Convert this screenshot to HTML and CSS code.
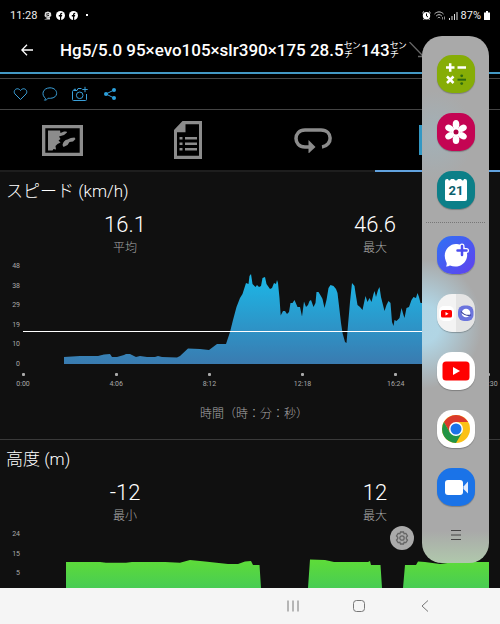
FILE: index.html
```html
<!DOCTYPE html>
<html lang="ja">
<head>
  <meta charset="UTF-8" />
  <meta name="viewport" content="width=device-width, initial-scale=1.0"/>
  <title>Hg5/5.0</title>
  <link rel="stylesheet" href="styles.css">
</head>
<body>

  <div class="screen">

    <div class="status-bar">
      <span class="clock">11:28</span>
      <svg width="9" height="9" viewBox="0 0 9 9"><path d="M1 8.5h6V6.2L5.2 7 3 6.6 1.5 5 2 1.5 5 .5l3 1.2L8.3 5 6 6.5z" fill="#ddd"/><path d="M3 3.2l3-.6M3.4 5L6 4.4" stroke="#222"/></svg>
      <svg width="9" height="9" viewBox="0 0 9 9"><circle cx="4.5" cy="4.5" r="4.5" fill="#fff"/><path d="M4 9V5.5H2.8V4H4c0-1.600.6-2.300 2.200-2.200V3c-.8 0-1 .2-1 1h1L6 5.500h-.8V9z" fill="#000"/></svg>
      <svg width="9" height="9" viewBox="0 0 9 9"><circle cx="4.5" cy="4.5" r="4.5" fill="#fff"/><path d="M4 9V5.5H2.8V4H4c0-1.600.6-2.300 2.200-2.200V3c-.8 0-1 .2-1 1h1L6 5.500h-.8V9z" fill="#000"/></svg>
      <span class="more-dot"></span>
      <div class="status-right">
        <svg width="9" height="9" viewBox="0 0 9 9"><circle cx="4.500" cy="4.800" r="3.700" fill="#fff"/><path d="M.4 2L2 .5M8.600 2L7 .5M1.500 8.800l1-1M7.500 8.800l-1-1" stroke="#fff"/><path d="M4.500 2.500v2.500l1.500 1" stroke="#000" fill="none"/></svg>
        <svg width="12" height="9" viewBox="0 0 12 9" fill="none" stroke="#ccc"><path d="M.5 3C3 .2 7 .2 9.500 3M2.200 5C4 3.200 6 3.200 7.800 5M3.800 7c.8-.8 1.600-.8 2.400 0"/><path d="M8.500 8.500V6M10.500 5.500v3" stroke="#888"/></svg>
        <svg width="9" height="9" viewBox="0 0 9 9"><path d="M0 7h1v2H0zM2.500 5h1v4h-1zM5 3h1v6H5zM7.500 1h1v8h-1z" fill="#ddd"/></svg>
        <span>87%</span>
        <svg width="6" height="9" viewBox="0 0 6 9"><path d="M0 1.500h2V0h2v1.500h2V9H0z" fill="#fff"/></svg>
      </div>
    </div>

    <header class="title-bar">
      <button class="back" type="button" aria-label="戻る">
        <svg width="12" height="12" viewBox="0 0 12 12" fill="none" stroke="#fff" stroke-width="1.300"><path d="M12 6H1M6 .8L.8 6 6 11.200"/></svg>
      </button>
      <h1>Hg5/5.0 95×evo105×slr390×175 28.5<span class="unit">㌢</span>143<span class="unit">㌢</span></h1>
      <svg class="title-arrow" width="16" height="16" viewBox="0 0 16 16" fill="none" stroke="#666" stroke-width="1.300"><path d="M.5 0L14 14M9 14.500h5.500V9"/></svg>
    </header>

    <div class="actions">
      <button type="button" aria-label="いいね">
        <svg width="16" height="16" viewBox="0 0 16 16"><path d="M8.500 13.500L3 8C.3 4.800 5.100.2 8.500 4.500 11.900.2 16.700 4.800 14 8z"/></svg>
      </button>
      <button type="button" aria-label="コメント">
        <svg width="16" height="16" viewBox="0 0 16 16"><path d="M3.500 12.300C-1 9 .5 2 8 1.800 16.500 2 17 12 8.500 12.300c-1 .1-1.500 0-2.300-.1-1.200 1.600-2.500 2-3.700 2 .7-.6 1-1.200 1-1.900z"/></svg>
      </button>
      <button type="button" aria-label="写真を追加">
        <svg width="16" height="16" viewBox="0 0 16 16"><path d="M9.500 2.500H6L5 4.500H1.500q-1 0-1 1v8q0 1 1 1h12q1 0 1-1V8M2 4.300V3.300h2M13 .8v5.400M10.300 3.500h5.400"/><circle cx="7.700" cy="9.300" r="3.300"/></svg>
      </button>
      <button type="button" aria-label="共有">
        <svg class="share" width="16" height="16" viewBox="0 0 16 16"><path d="M12 4L4 8l8 4"/><circle cx="12" cy="4" r="2"/><circle cx="4" cy="8" r="2"/><circle cx="12" cy="12" r="2"/></svg>
      </button>
    </div>

    <nav class="tabs">
      <button type="button" aria-label="地図">
        <svg width="41" height="31" viewBox="0 0 41 31"><path fill-rule="evenodd" d="M0 0h41v31H0zM3.300 3.300v24.400h34.400V3.300z"/><path d="M6 5.500h12l.5 2.500 3.500-1.500q3.500-.5 3 1l-3 2.500-5 1.500 1.500 2.500-2 1.500 2 2-3 1.500-2 2 .5 3.500-2.500-.5-1 1.500H6zM20.500 20q1-5 5-5.500 3-2 7-2l1 1.500-2.500 2.500-3.500.5-2 3-4 2z"/></svg>
      </button>
      <button type="button" aria-label="詳細">
        <svg width="28" height="38" viewBox="0 0 28 38"><path fill-rule="evenodd" d="M8.500 0H28v38H0V9zM11.500 3.300v8H3v23.500h22V3.300z"/><path d="M5.500 16h3v2.500h-3zM11 16h12v2.500H11zM5.500 21.500h3V24h-3zM11 21.500h12V24H11zM5.500 27h3v2.500h-3zM11 27h12v2.500H11z"/></svg>
      </button>
      <button type="button" aria-label="ラップ">
        <svg width="38" height="26" viewBox="0 0 38 26"><path d="M16 20H11C-1 20-1 3 11 3h16c12 0 12 15.500 1 17" fill="none" stroke="#8c8c8c" stroke-width="3.500"/><path d="M14.500 13L21.500 20l-7 6.500z"/></svg>
      </button>
      <button class="active" type="button" aria-label="グラフ">
        <svg width="37" height="30" viewBox="0 0 37 30"><path d="M0 0h3v30H0zM0 27h37v3H0zM8 15h6v10H8zM17 5h6v20h-6zM26 10h6v15h-6z"/></svg>
      </button>
    </nav>

    <main class="charts">
      <section class="card">
        <h2>スピード (km/h)</h2>
        <div class="stats">
          <div class="stat"><strong>16.1</strong><span>平均</span></div>
          <div class="stat"><strong>46.6</strong><span>最大</span></div>
        </div>
        <div class="chart">
          <ul class="y-axis">
            <li>48</li><li>38</li><li>29</li><li>19</li><li>10</li><li>0</li>
          </ul>
          <div class="plot-area">
            <svg class="plot" viewBox="23 266 466 98" preserveAspectRatio="none">
              <defs>
                <linearGradient id="speed" x1="0" y1="0" x2="0" y2="1">
                  <stop offset="0" stop-color="#1bb8e8"/>
                  <stop offset="1" stop-color="#3a7bb0"/>
                </linearGradient>
              </defs>
              <path fill="url(#speed)" d="M64 364V357L80 356 98 356 104 354.500 110 354 112 357 117 357 124 355 126 354 130 354 136 357 140 356 147 357 155 357 158 356 162 357 177 357.500 180 356 188 348.500 200 349 209 350 217 344 226 344 228 338 230 332 233 320 236.500 307 240 298 242.500 294 246 283 248.500 284 249.500 276 251 274 252.500 284 255.500 287 257 285 259 287 261 286 262.500 278 265 277 266.500 284 270 289 272 288 274 283 276 284 277 280 278 283 279.500 298 280.700 315.500 283 311 285 311 287 314 289 312 290.500 303 292.500 303 294.500 300 297.500 307 300 307 302 316.500 304 301.500 306 307 308 305 309.500 301 311 300 313.500 307 315.500 303 316.500 292 318.500 292 321.500 297 322.500 299 324.500 308 326.500 300 328.500 288 330.500 285 333.500 286 336 289 337.500 293 339.500 310 341 323 342.500 333 345 342 346.500 343 348 325 350 302 352 283 354.500 286 355.500 293 357.500 305 360 307 362.500 310 364 303 365.500 296 367.500 302 369.500 298 371.500 302 373.500 294 374.500 291 376 297 378 290 379.500 287 381 297 382.500 303 384.500 311 386.500 305 388.500 301 390.500 303 392 322 393.500 326 394.500 320 396.500 321 399.500 318 401.500 308 403.500 315 404.500 318 406.500 308 409 307 411.500 300 413.500 297 416 298 417.500 293 419 297 420.500 303 426 303 434 312 445 332 448 364z"/>
              <path d="M23 331.500h466" stroke="#fff"/>
            </svg>
            <ul class="x-axis">
              <li>0:00</li><li>4:06</li><li>8:12</li><li>12:18</li><li>16:24</li><li>20:30</li>
            </ul>
          </div>
        </div>
        <p class="axis-title">時間（時：分：秒）</p>
      </section>

      <section class="card">
        <h2>高度 (m)</h2>
        <div class="stats">
          <div class="stat"><strong>-12</strong><span>最小</span></div>
          <div class="stat"><strong>12</strong><span>最大</span></div>
        </div>
        <div class="chart">
          <ul class="y-axis short">
            <li>24</li><li>15</li><li>5</li>
          </ul>
          <div class="plot-area">
            <svg class="plot short" viewBox="23 534 466 54" preserveAspectRatio="none">
              <defs>
                <linearGradient id="altitude" x1="0" y1="0" x2="0" y2="1">
                  <stop offset="0" stop-color="#5edc38"/>
                  <stop offset="1" stop-color="#48cc54"/>
                </linearGradient>
              </defs>
              <path fill="url(#altitude)" d="M66 588V562H100L106 562.700H126L132 562H165L180 562.700 190 560 205 561.500 228 564H238L245 561.500 251 561 253 565H259.500L261 588zM308 588L310 559.500 325 560 334 562H368L370 561 371 565H380.500L382 588zM403 588L405 565H416L418 561.500 425 562 440 564 455 562H489V588z"/>
            </svg>
          </div>
        </div>
      </section>
    </main>

    <nav class="system-nav">
      <button type="button" aria-label="履歴"><svg width="14" height="14" viewBox="0 0 14 14"><path d="M2 1.500v11M7 1.500v11M12 1.500v11"/></svg></button>
      <button type="button" aria-label="ホーム"><svg width="14" height="14" viewBox="0 0 14 14"><rect x="1.500" y="1.500" width="11" height="11" rx="3"/></svg></button>
      <button type="button" aria-label="戻る"><svg width="14" height="14" viewBox="0 0 14 14"><path d="M10 1.500L4 7l6 5.500"/></svg></button>
    </nav>

    <button class="panel-settings" type="button" aria-label="設定">
      <svg width="14" height="14" viewBox="0 0 14 14" fill="none" stroke="#666" stroke-width="1.300"><path d="M5.500 1h3l.6 1.700 1.800-.3L12.500 5l-1.200 1.300v1.400L12.500 9l-1.600 2.600-1.800-.3L8.500 13h-3l-.6-1.700-1.800.3L1.500 9l1.200-1.300V6.300L1.500 5l1.600-2.600 1.800.3z"/><circle cx="7" cy="7" r="2.200"/></svg>
    </button>

    <!-- edge panel -->
    <aside class="edge-panel">
      <div class="app-group">
        <button class="app calc" type="button" aria-label="電卓">
          <svg viewBox="0 0 38 38" fill="none" stroke="#fff" stroke-width="2.500"><path d="M9 12.500h8.500M13.200 8.200v8.600M20.500 12.500H29M10 21.500l6.500 6.500M16.500 21.500L10 28"/><path d="M20.500 24.700H29" stroke="#2f6a10" stroke-width="2"/><circle cx="24.700" cy="20.800" r="1.400" fill="#2f6a10" stroke="none"/><circle cx="24.700" cy="28.600" r="1.400" fill="#2f6a10" stroke="none"/></svg>
        </button>
        <button class="app gallery" type="button" aria-label="ギャラリー">
          <svg viewBox="0 0 38 38" fill="#fff"><g id="petals"><ellipse cx="19" cy="11.500" rx="3.300" ry="4.500"/><ellipse cx="19" cy="26.500" rx="3.300" ry="4.500"/></g><use href="#petals" transform="rotate(60 19 19)"/><use href="#petals" transform="rotate(120 19 19)"/><circle cx="19" cy="19" r="4.500"/><circle cx="19" cy="19" r="2.500" fill="#b00045"/></svg>
        </button>
        <button class="app calendar" type="button" aria-label="カレンダー">
          <svg viewBox="0 0 38 38"><path d="M8 10q0-2 2-2h1q1 3 3 0h3q2 3 4 0h3q2 3 3 0h1q2 0 2 2v18q0 2-2 2H10q-2 0-2-2z" fill="#fff"/><text x="19" y="24" class="day">21</text></svg>
        </button>
      </div>
      <div class="app-group">
        <button class="app messages" type="button" aria-label="メッセージ">
          <svg viewBox="0 0 38 38"><path d="M9 30.500q1.500-2.500 0-5C4.500 15 13 7 20 8c8 1 11 7 10 13-1.500 8-10 11.500-17 8.500q-2 1.200-4 1z" fill="#fff"/><path d="M25 10v9M20.500 14.500h9" stroke="#fff" stroke-width="5" stroke-linecap="round"/><path d="M25 10v9M20.500 14.500h9" stroke="#4c4df0" stroke-width="2.500" stroke-linecap="round"/></svg>
        </button>
        <button class="app pair" type="button" aria-label="YouTubeとブラウザ">
          <svg viewBox="0 0 38 38"><rect x="2" y="12" width="15" height="15" rx="5" fill="#fff"/><rect x="4" y="16" width="11" height="7.500" rx="1.500" fill="#f00"/><path d="M8.500 18v3.500l3-1.700z" fill="#fff"/><rect x="21" y="11.500" width="15.500" height="15.500" rx="6" fill="#6b74dd"/><circle cx="29" cy="19" r="4.300" fill="#fff"/><path d="M24 17.500q4 5 10 3.500" stroke="#343c91" stroke-width="1.200" fill="none"/></svg>
        </button>
        <button class="app youtube" type="button" aria-label="YouTube">
          <svg viewBox="0 0 38 38"><rect x="5.500" y="9.500" width="27" height="19" rx="3.500" fill="#f00"/><path d="M16 15v8l7-4z" fill="#fff"/></svg>
        </button>
        <button class="app chrome" type="button" aria-label="Chrome">
          <svg viewBox="0 0 38 38"><circle cx="19" cy="19" r="14" fill="#fbc116"/><path d="M6.900 12A14 14 0 0 1 31.100 12H19L12.900 22.500z" fill="#db3a2c"/><path d="M6.900 12A14 14 0 0 0 19 33L25.100 22.500H12.900z" fill="#229445"/><circle cx="19" cy="19" r="7" fill="#fff"/><circle cx="19" cy="19" r="5.500" fill="#1a73e8"/></svg>
        </button>
        <button class="app meet" type="button" aria-label="ビデオ通話">
          <svg viewBox="0 0 38 38"><rect x="8" y="12" width="18" height="15" rx="3" fill="#fff"/><path d="M26.500 18.500L31 13.500v12l-4.500-4.500z" fill="#e2ebfc"/></svg>
        </button>
      </div>
      <button class="panel-menu" type="button" aria-label="編集">
        <svg width="12" height="10" viewBox="0 0 12 10"><path d="M1 .5h10M1 5h10M1 9.500h10" stroke="#444"/></svg>
      </button>
    </aside>

  </div>

</body>
</html>
```

FILE: styles.css
```css
* {
  margin: 0;
  padding: 0;
  box-sizing: border-box;
}

body {
  font-family: Roboto, "Noto Sans CJK JP", sans-serif;
  background-color: #000;
  color: #fff;
}

ul {
  list-style: none;
}

button {
  background: none;
  border: none;
  font-family: inherit;
  cursor: pointer;
}

svg {
  display: block;
}

.screen {
  position: relative;
  display: flex;
  flex-direction: column;
  height: 100vh;
  overflow: hidden;
}

/* status bar */
.status-bar {
  display: flex;
  align-items: center;
  gap: 4px;
  height: 30px;
  padding: 0 10px;
  font-size: 11px;
  color: #eee;
}

.clock {
  margin-right: 2px;
}

.more-dot {
  width: 2px;
  height: 2px;
  margin-left: 4px;
  background-color: #fff;
}

.status-right {
  display: flex;
  align-items: center;
  gap: 3px;
  margin-left: auto;
}

/* title */
.title-bar {
  display: flex;
  align-items: center;
  height: 44px;
  padding-bottom: 2px;
  border-bottom: 2px solid #4398c4;
}

.back {
  display: flex;
  width: 60px;
  padding-left: 21px;
}

h1 {
  font-size: 17px;
  font-weight: 500;
  line-height: 24px;
  white-space: nowrap;
}

.unit {
  font-weight: 300;
}

.title-arrow {
  flex: none;
  margin-left: 2px;
}

.actions {
  display: flex;
  align-items: center;
  gap: 14px;
  height: 32px;
  margin-top: 4px;
  padding-left: 12px;
  border-top: 1px solid #444;
  border-bottom: 1px solid #444;
}

.actions svg {
  fill: none;
  stroke: #3a9fd8;
}

.actions .share circle {
  fill: #2ba0dc;
  stroke: none;
}

/* tabs */
.tabs {
  display: flex;
  height: 62px;
}

.tabs button {
  flex: 1;
  display: flex;
  align-items: center;
  justify-content: center;
  border-bottom: 2px solid #1e1e1e;
}

.tabs svg {
  fill: #8c8c8c;
}

.tabs .active {
  border-bottom-color: #61a2df;
}

.tabs .active svg {
  fill: #3398c4;
}

/* charts */
.charts {
  flex: 1;
  min-height: 0;
  overflow: hidden;
  background-color: #101010;
}

.card {
  padding-top: 7px;
  border-bottom: 1px solid #3a3a3a;
}

h2 {
  padding-left: 6px;
  font-size: 17px;
  font-weight: 300;
  line-height: 24px;
}

.stats {
  display: flex;
  padding-top: 7px;
}

.stat {
  flex: 1;
  display: flex;
  flex-direction: column;
  align-items: center;
}

.stat strong {
  font-size: 22px;
  font-weight: 300;
  line-height: 30px;
}

.stat span {
  font-size: 12px;
  font-weight: 300;
  line-height: 16px;
  color: #aaa;
}

.chart {
  display: flex;
  gap: 3px;
  padding: 4px 11px 0 0;
  font-size: 7px;
  line-height: 12px;
  color: #aaa;
}

.y-axis {
  display: flex;
  flex-direction: column;
  justify-content: space-between;
  width: 20px;
  height: 110px;
  text-align: right;
}

.y-axis.short {
  height: 51px;
}

.plot-area {
  flex: 1;
  padding-top: 6px;
}

.plot {
  width: 100%;
  height: 98px;
}

.plot.short {
  height: 54px;
}

.x-axis {
  display: flex;
  justify-content: space-between;
  padding-top: 9px;
}

.x-axis li {
  display: flex;
  flex-direction: column;
  align-items: center;
  width: 0;
}

.x-axis li::before {
  content: "";
  width: 3px;
  height: 3px;
  margin-bottom: 2px;
  border-radius: 1px;
  background-color: #aaa;
}

.axis-title {
  padding: 16px 0 17px 8px;
  font-size: 12px;
  font-weight: 300;
  line-height: 16px;
  text-align: center;
  color: #aaa;
}

/* android buttons */
.system-nav {
  display: flex;
  justify-content: flex-end;
  height: 36px;
  padding-right: 42px;
  background-color: #f5f5f5;
}

.system-nav button {
  display: flex;
  align-items: center;
  justify-content: center;
  width: 66px;
}

.system-nav svg {
  fill: none;
  stroke: #777;
}

/* edge panel */
.edge-panel {
  position: absolute;
  top: 36px;
  right: 11px;
  width: 67px;
  padding-top: 19px;
  border-radius: 20px;
  background:
    radial-gradient(ellipse 60px 65px at 0 288px, rgba(178, 218, 235, 0.9) 30%, transparent),
    radial-gradient(ellipse 40px 45px at 12px 100px, rgba(155, 185, 198, 0.5), transparent),
    linear-gradient(transparent 495px, #b0c8ac),
    #a9a9a9;
}

.app-group {
  display: flex;
  flex-direction: column;
  align-items: center;
  gap: 20px;
}

.app-group + .app-group {
  margin: 13px 4px 0;
  padding-top: 13px;
  border-top: 1px dotted #777;
}

.app {
  width: 38px;
  height: 38px;
  border-radius: 15px;
  box-shadow: 0 1px 1px rgba(0, 0, 0, 0.25);
}

.calc {
  background-color: #86ad06;
}

.gallery {
  background-color: #c40453;
}

.calendar {
  background-color: #0c7f88;
}

.day {
  font-size: 13px;
  font-weight: 700;
  text-anchor: middle;
  fill: #0b5f6c;
}

.messages {
  background: linear-gradient(135deg, #2f72f5, #6140ee);
}

.pair {
  background: linear-gradient(to right, #f3f3f3 50%, #e4e4e4 50%);
}

.youtube,
.chrome {
  background-color: #fff;
}

.meet {
  background-color: #1a73e8;
}

.panel-menu {
  display: flex;
  align-items: center;
  justify-content: center;
  width: 100%;
  height: 57px;
}

.panel-settings {
  position: absolute;
  right: 86px;
  bottom: 74px;
  display: flex;
  align-items: center;
  justify-content: center;
  width: 24px;
  height: 24px;
  border-radius: 50%;
  background-color: #aaa;
}
```
